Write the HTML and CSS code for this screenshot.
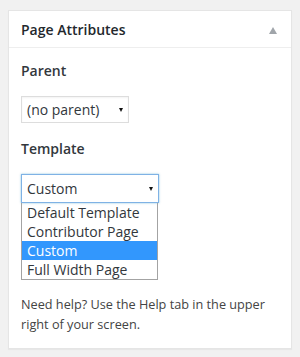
FILE: index.html
```html
<!DOCTYPE html>
<html lang="en">
<head>
    <meta charset="UTF-8">
    <meta name="viewport" content="width=device-width, initial-scale=1.0">
    <title>Page Attributes</title>
    <link rel="stylesheet" href="styles.css">
</head>
<body>
    <div class="postbox">
        <div class="postbox-header">
            <h2>Page Attributes</h2>
            <span class="toggle-arrow"></span>
        </div>

        <div class="inside">
            <p class="field-label">Parent</p>
            <div class="select parent-select">
                <span>(no parent)</span>
                <span class="caret"></span>
            </div>

            <p class="field-label">Template</p>
            <div class="template-wrap">
                <div class="select template-select">
                    <span>Custom</span>
                    <span class="caret"></span>
                </div>
                <ul class="dropdown">
                    <li>Default Template</li>
                    <li>Contributor Page</li>
                    <li class="selected">Custom</li>
                    <li>Full Width Page</li>
                </ul>
            </div>

            <p class="help">Need help? Use the Help tab in the upper right of your screen.</p>
        </div>
    </div>
</body>
</html>
```

FILE: styles.css
```css
body {
    background: #f1f1f1;
    color: #444;
    font-family: "Open Sans", "Noto Sans", sans-serif;
    margin: 0;
    padding: 10px 8px;
}

.postbox {
    background: #fff;
    border: 1px solid #e5e5e5;
    box-shadow: 0 1px 1px rgba(0, 0, 0, 0.04);
}

.postbox-header {
    display: flex;
    align-items: center;
    justify-content: space-between;
    height: 36px;
    padding: 0 14px 0 12px;
    border-bottom: 1px solid #eee;
}

.postbox-header h2 {
    margin: 0;
    font-size: 14px;
    font-weight: 600;
    color: #23282d;
}

.toggle-arrow {
    width: 0;
    height: 0;
    border-left: 4px solid transparent;
    border-right: 4px solid transparent;
    border-bottom: 7px solid #a0a5aa;
    margin-top: 2px;
}

.inside {
    padding: 13px 12px 14px;
}

.field-label {
    margin: 0 0 16px;
    font-size: 14px;
    font-weight: 600;
    line-height: 19px;
    color: #32373c;
}

.select {
    box-sizing: border-box;
    display: flex;
    align-items: center;
    justify-content: space-between;
    height: 27px;
    padding: 0 5px 0 5px;
    border: 1px solid #ddd;
    font-size: 14px;
    color: #32373c;
    box-shadow: inset 0 1px 2px rgba(0, 0, 0, 0.05);
}

.caret {
    width: 0;
    height: 0;
    border-left: 2px solid transparent;
    border-right: 2px solid transparent;
    border-top: 4px solid #111;
}

.parent-select {
    width: 108px;
    margin-bottom: 16px;
}

.template-wrap {
    width: 138px;
}

.template-select {
    height: 29px;
    border-color: #7fb2e5;
    box-shadow: 0 0 2px rgba(30, 140, 190, 0.5);
}

.dropdown {
    list-style: none;
    margin: 0;
    padding: 0;
    width: 137px;
    box-sizing: border-box;
    border: 1px solid #a3a3a3;
    border-top: none;
}

.dropdown li {
    height: 19px;
    line-height: 19px;
    padding: 0 5px;
    font-size: 14px;
    color: #32373c;
}

.dropdown li.selected {
    background: #3297fd;
    color: #fff;
}

.help {
    margin: 14px 0 0;
    font-size: 12.7px;
    line-height: 20px;
    color: #444;
}
```
